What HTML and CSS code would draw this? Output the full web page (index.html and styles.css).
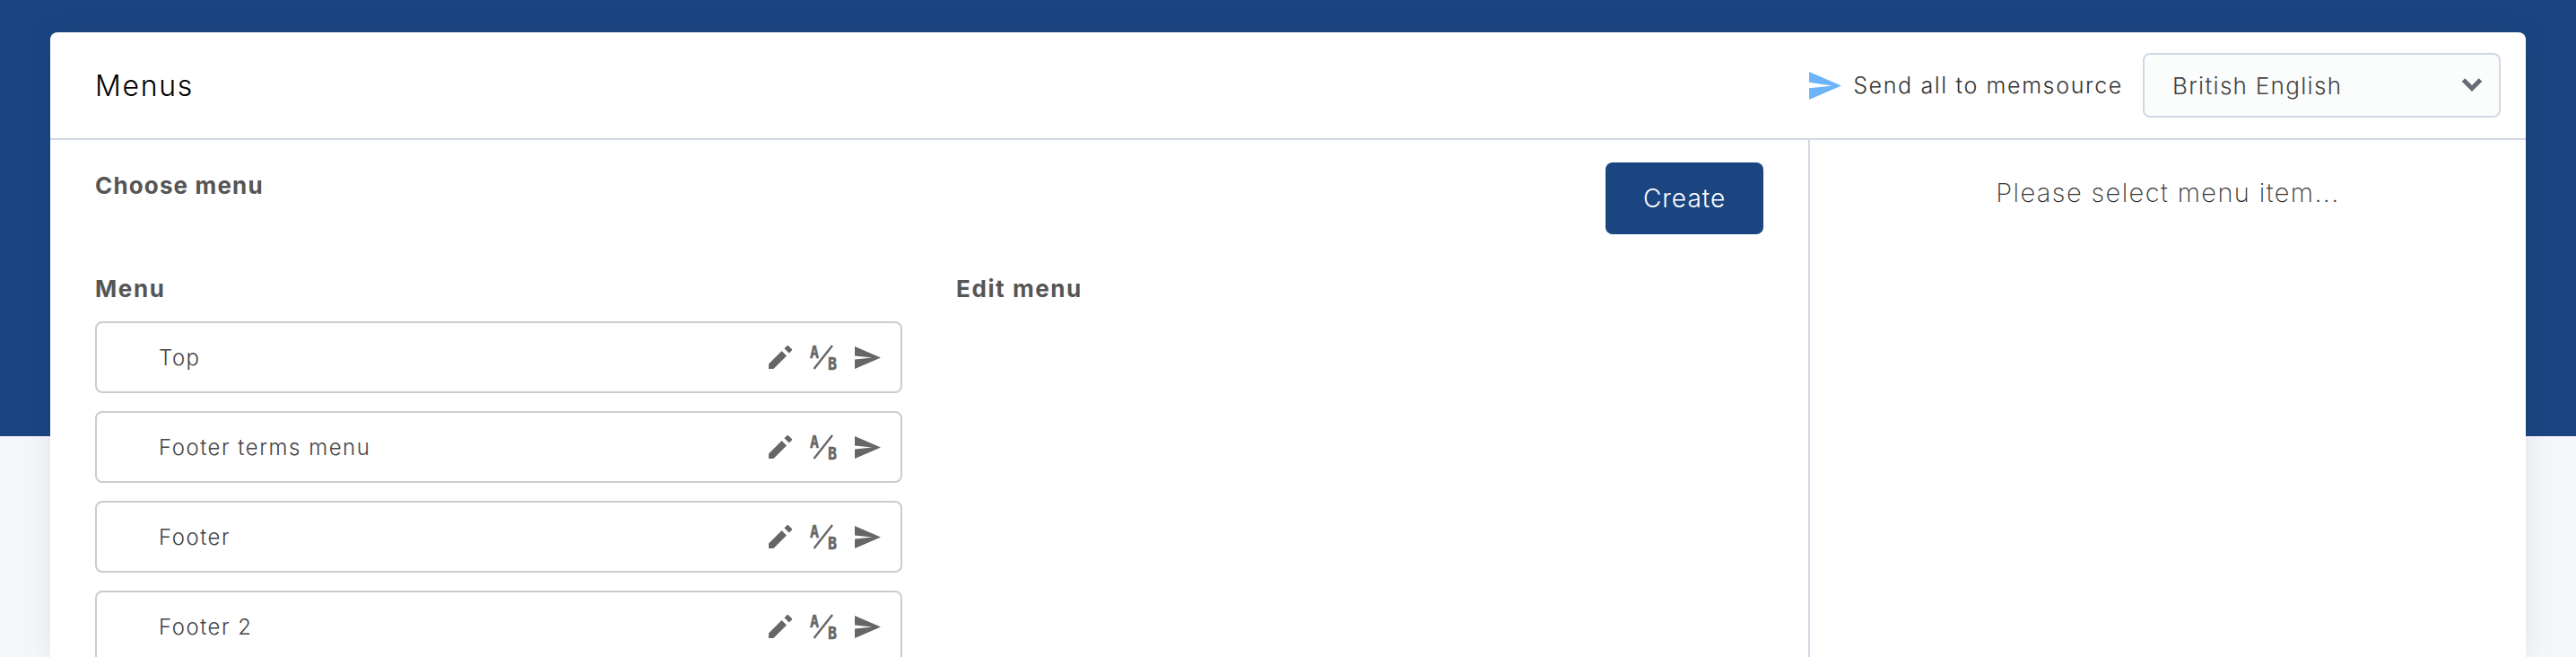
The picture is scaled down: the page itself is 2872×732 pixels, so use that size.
FILE: index.html
```html
<!DOCTYPE html>
<html lang="en">
<head>
<meta charset="utf-8">
<title>Menus</title>
<link rel="stylesheet" href="styles.css">
</head>
<body>
<main class="card">
  <header class="card-head">
    <h1 class="title">Menus</h1>
    <div class="head-tools">
      <a class="send-all"><svg class="send-all-icon" viewBox="0 0 36 31"><path d="M0 0 36 15.5 0 31V18.3L26 15.5 0 11.7Z"/></svg><span>Send all to memsource</span></a>
      <div class="select"><span>British English</span>
        <svg class="chevron" viewBox="0 0 24 18"><path d="M2.5 3 12 12.5 21.5 3"/></svg>
      </div>
    </div>
  </header>
  <div class="card-body">
    <section class="left">
      <div class="left-top">
        <h2 class="label">Choose menu</h2>
        <button class="create">Create</button>
      </div>
      <div class="cols">
        <div class="col-menu">
          <h3 class="label">Menu</h3>
          <ul class="rows">
            <li class="row"><span class="row-name">Top</span><span class="row-icons"><svg class="ic-pencil" viewBox="0 0 26 26"><path d="M0 20.6V26H5.4L20 11.4 14.6 6ZM25.6 5.8a1.4 1.4 0 0 0 0-2L22.2.4a1.4 1.4 0 0 0-2 0L17.4 3.2 22.8 8.6Z"/></svg><svg class="ic-ab" viewBox="0 0 30 27"><text class="ab-letter" x="0" y="13.5" textLength="10" lengthAdjust="spacingAndGlyphs">A</text><text class="ab-letter" x="20" y="27" textLength="10" lengthAdjust="spacingAndGlyphs">B</text><path class="ab-slash" d="M4.5 26 25 0"/></svg><svg class="ic-send" viewBox="0 0 36 31"><path d="M0 0 36 15.5 0 31V18L24 15.5 0 13Z"/></svg></span></li>
            <li class="row"><span class="row-name">Footer terms menu</span><span class="row-icons"><svg class="ic-pencil" viewBox="0 0 26 26"><path d="M0 20.6V26H5.4L20 11.4 14.6 6ZM25.6 5.8a1.4 1.4 0 0 0 0-2L22.2.4a1.4 1.4 0 0 0-2 0L17.4 3.2 22.8 8.6Z"/></svg><svg class="ic-ab" viewBox="0 0 30 27"><text class="ab-letter" x="0" y="13.5" textLength="10" lengthAdjust="spacingAndGlyphs">A</text><text class="ab-letter" x="20" y="27" textLength="10" lengthAdjust="spacingAndGlyphs">B</text><path class="ab-slash" d="M4.5 26 25 0"/></svg><svg class="ic-send" viewBox="0 0 36 31"><path d="M0 0 36 15.5 0 31V18L24 15.5 0 13Z"/></svg></span></li>
            <li class="row"><span class="row-name">Footer</span><span class="row-icons"><svg class="ic-pencil" viewBox="0 0 26 26"><path d="M0 20.6V26H5.4L20 11.4 14.6 6ZM25.6 5.8a1.4 1.4 0 0 0 0-2L22.2.4a1.4 1.4 0 0 0-2 0L17.4 3.2 22.8 8.6Z"/></svg><svg class="ic-ab" viewBox="0 0 30 27"><text class="ab-letter" x="0" y="13.5" textLength="10" lengthAdjust="spacingAndGlyphs">A</text><text class="ab-letter" x="20" y="27" textLength="10" lengthAdjust="spacingAndGlyphs">B</text><path class="ab-slash" d="M4.5 26 25 0"/></svg><svg class="ic-send" viewBox="0 0 36 31"><path d="M0 0 36 15.5 0 31V18L24 15.5 0 13Z"/></svg></span></li>
            <li class="row"><span class="row-name">Footer 2</span><span class="row-icons"><svg class="ic-pencil" viewBox="0 0 26 26"><path d="M0 20.6V26H5.4L20 11.4 14.6 6ZM25.6 5.8a1.4 1.4 0 0 0 0-2L22.2.4a1.4 1.4 0 0 0-2 0L17.4 3.2 22.8 8.6Z"/></svg><svg class="ic-ab" viewBox="0 0 30 27"><text class="ab-letter" x="0" y="13.5" textLength="10" lengthAdjust="spacingAndGlyphs">A</text><text class="ab-letter" x="20" y="27" textLength="10" lengthAdjust="spacingAndGlyphs">B</text><path class="ab-slash" d="M4.5 26 25 0"/></svg><svg class="ic-send" viewBox="0 0 36 31"><path d="M0 0 36 15.5 0 31V18L24 15.5 0 13Z"/></svg></span></li>
          </ul>
        </div>
        <div class="col-edit">
          <h3 class="label">Edit menu</h3>
        </div>
      </div>
    </section>
    <aside class="right">
      <p class="hint">Please select menu item...</p>
    </aside>
  </div>
</main>
</body>
</html>
```

FILE: styles.css
```css
* { box-sizing: border-box; }
html, body { margin: 0; height: 732px; overflow: hidden; }
body {
  background: linear-gradient(#1b4581 0, #1b4581 486px, #f5f6fa 486px);
  font-family: Inter, "Liberation Sans", sans-serif;
  color: #555;
  padding: 36px 56px 0;
}
.card {
  background: #fff;
  border-radius: 8px 8px 0 0;
  height: 696px;
  box-shadow: 0 0 30px rgba(30, 40, 70, .09);
  display: flex;
  flex-direction: column;
}
.card-head {
  height: 120px;
  flex: none;
  border-bottom: 2px solid #cfd8e4;
  display: flex;
  align-items: center;
  justify-content: space-between;
  padding: 0 28px 0 50px;
}
.title { margin: 0; font-size: 32px; font-weight: 300; color: #000; letter-spacing: 1.7px; }
.head-tools { display: flex; align-items: center; }
.send-all { display: flex; align-items: center; gap: 13px; font-size: 25px; font-weight: 300; color: #333; margin-right: 22px; letter-spacing: 1.65px; }
.send-all-icon { width: 36px; height: 31px; fill: #6db3f8; }
.select {
  width: 399px; height: 72px;
  border: 2px solid #cfd8e4;
  border-radius: 8px;
  background: #fbfdfd;
  display: flex;
  align-items: center;
  justify-content: space-between;
  padding: 0 18px 0 31px;
  font-size: 26px;
  font-weight: 300;
  color: #444;
  letter-spacing: 1.3px;
}
.chevron { width: 24px; height: 18px; fill: none; stroke: #666b75; stroke-width: 5; }
.card-body { flex: 1; display: flex; min-height: 0; }
.left { width: 1962px; flex: none; padding: 25px 50px 0; border-right: 2px solid #cfd8e4; }
.left-top { display: flex; justify-content: space-between; align-items: flex-start; height: 115px; }
.label { margin: 0; font-size: 26px; font-weight: 700; color: #555; line-height: 32px; letter-spacing: 1.6px; }
.left-top .label { margin-top: 10px; letter-spacing: 1.15px; }
.create {
  width: 176px; height: 80px;
  background: #1b4581;
  border: 0;
  border-radius: 8px;
  color: #fff;
  font: 300 28px Inter, "Liberation Sans", sans-serif;
  letter-spacing: 1px;
}
.cols { display: flex; gap: 60px; padding-top: 10px; }
.col-menu { width: 900px; flex: none; }
.rows { list-style: none; margin: 20px 0 0; padding: 0; display: flex; flex-direction: column; gap: 20px; }
.row {
  height: 80px;
  border: 2px solid #ccc;
  border-radius: 8px;
  display: flex;
  align-items: center;
  justify-content: space-between;
  padding: 0 22px 0 69px;
}
.row-name { font-size: 24px; font-weight: 300; color: #444; letter-spacing: 1.5px; }
.row-icons { display: flex; align-items: center; gap: 20px; fill: #666; }
.ic-pencil { width: 26px; height: 26px; }
.ic-ab { width: 30px; height: 27px; overflow: visible; }
.ic-send { width: 29px; height: 25px; }
.ab-letter { font: 700 19px "DejaVu Sans Mono", monospace; fill: #666; stroke: #666; stroke-width: .5; }
.ab-slash { stroke: #666; stroke-width: 2.4; fill: none; }
.right { flex: 1; padding-top: 41px; }
.hint { margin: 0; text-align: center; font-size: 29px; font-weight: 200; color: #333; line-height: 36px; letter-spacing: 1.4px; }
```
